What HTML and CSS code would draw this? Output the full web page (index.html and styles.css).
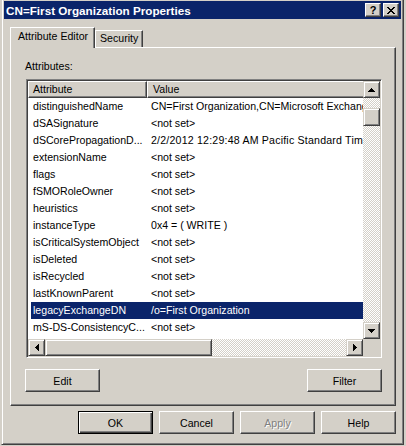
FILE: index.html
```html
<!DOCTYPE html>
<html>
<head>
<meta charset="utf-8">
<link rel="stylesheet" href="styles.css">
</head>
<body>
<div class="window">
  <div class="titlebar">
    <span class="title">CN=First Organization Properties</span>
    <div class="capbtns">
      <div class="capbtn help">?</div>
      <div class="capbtn">
        <svg width="8" height="7" viewBox="0 0 8 7" shape-rendering="crispEdges"><path d="M0 0h2v1h-2zM6 0h2v1h-2zM1 1h2v1h-2zM5 1h2v1h-2zM2 2h4v1h-4zM3 3h2v1h-2zM2 4h4v1h-4zM1 5h2v1h-2zM5 5h2v1h-2zM0 6h2v1h-2zM6 6h2v1h-2z" fill="#000"/></svg>
      </div>
    </div>
  </div>
  <div class="tabs">
    <div class="tab active">Attribute Editor</div>
    <div class="tab inactive">Security</div>
  </div>
  <div class="panel">
    <div class="label">Attributes:</div>
    <div class="listbox">
      <div class="listview">
        <div class="header">
          <div class="hcell h1">Attribute</div>
          <div class="hcell h2">Value</div>
        </div>
        <div class="row"><div class="c1">distinguishedName</div><div class="c2">CN=First Organization,CN=Microsoft Exchange,CN=Services,CN=Configuration</div></div>
        <div class="row"><div class="c1">dSASignature</div><div class="c2">&lt;not set&gt;</div></div>
        <div class="row"><div class="c1">dSCorePropagationD...</div><div class="c2 wide">2/2/2012 12:29:48 AM Pacific Standard Time</div></div>
        <div class="row"><div class="c1">extensionName</div><div class="c2">&lt;not set&gt;</div></div>
        <div class="row"><div class="c1">flags</div><div class="c2">&lt;not set&gt;</div></div>
        <div class="row"><div class="c1">fSMORoleOwner</div><div class="c2">&lt;not set&gt;</div></div>
        <div class="row"><div class="c1">heuristics</div><div class="c2">&lt;not set&gt;</div></div>
        <div class="row"><div class="c1">instanceType</div><div class="c2">0x4 = ( WRITE )</div></div>
        <div class="row"><div class="c1">isCriticalSystemObject</div><div class="c2">&lt;not set&gt;</div></div>
        <div class="row"><div class="c1">isDeleted</div><div class="c2">&lt;not set&gt;</div></div>
        <div class="row"><div class="c1">isRecycled</div><div class="c2">&lt;not set&gt;</div></div>
        <div class="row"><div class="c1">lastKnownParent</div><div class="c2">&lt;not set&gt;</div></div>
        <div class="row selected"><div class="c1">legacyExchangeDN</div><div class="c2">/o=First Organization</div></div>
        <div class="row"><div class="c1">mS-DS-ConsistencyC...</div><div class="c2">&lt;not set&gt;</div></div>
        <div class="row"><div class="c1">mS-DS-ConsistencyG...</div><div class="c2"></div></div>
      </div>
      <div class="vscroll">
        <div class="sbtn">
          <svg width="7" height="4" viewBox="0 0 7 4" shape-rendering="crispEdges"><path d="M3 0h1v1h-1zM2 1h3v1h-3zM1 2h5v1h-5zM0 3h7v1h-7z" fill="#000"/></svg>
        </div>
        <div class="vtrack"><div class="vthumb"></div></div>
        <div class="sbtn">
          <svg width="7" height="4" viewBox="0 0 7 4" shape-rendering="crispEdges"><path d="M0 0h7v1h-7zM1 1h5v1h-5zM2 2h3v1h-3zM3 3h1v1h-1z" fill="#000"/></svg>
        </div>
      </div>
      <div class="hscroll">
        <div class="sbtn">
          <svg width="4" height="7" viewBox="0 0 4 7" shape-rendering="crispEdges"><path d="M0 3h1v1h-1zM1 2h1v3h-1zM2 1h1v5h-1zM3 0h1v7h-1z" fill="#000"/></svg>
        </div>
        <div class="hthumb"></div>
        <div class="htrack"></div>
        <div class="sbtn">
          <svg width="4" height="7" viewBox="0 0 4 7" shape-rendering="crispEdges"><path d="M0 0h1v7h-1zM1 1h1v5h-1zM2 2h1v3h-1zM3 3h1v1h-1z" fill="#000"/></svg>
        </div>
      </div>
      <div class="corner"></div>
    </div>
    <div class="panelbtns">
      <button class="btn">Edit</button>
      <button class="btn">Filter</button>
    </div>
  </div>
  <div class="dlgbtns">
    <button class="btn default">OK</button>
    <button class="btn">Cancel</button>
    <button class="btn disabled">Apply</button>
    <button class="btn">Help</button>
  </div>
</div>
</body>
</html>
```
FILE: styles.css
```css
* { box-sizing: border-box; }
html, body { margin: 0; padding: 0; }
body {
  background: #d4d0c8;
  width: 406px;
  height: 446px;
  overflow: hidden;
  font-family: "Liberation Sans", Arial, sans-serif;
  font-size: 10.6px;
  color: #000;
}
.window {
  margin: -2px 0 0 1px;
  width: 403px;
  height: 447px;
  border: 1px solid;
  border-color: #d4d0c8 #404040 #404040 #d4d0c8;
  box-shadow: inset 1px 1px #fff, inset -1px -1px #808080;
  padding: 2px;
  display: flex;
  flex-direction: column;
}
.titlebar {
  height: 18px;
  flex: none;
  background: #0a246a;
  display: flex;
  align-items: center;
  padding: 0 2px;
}
.title {
  flex: 1;
  color: #fff;
  font-weight: bold;
  font-size: 11.7px;
  white-space: nowrap;
}
.capbtns { display: flex; gap: 2px; }
.capbtn {
  width: 16px;
  height: 14px;
  background: #d4d0c8;
  border: 1px solid;
  border-color: #fff #404040 #404040 #fff;
  box-shadow: inset -1px -1px #808080;
  display: flex;
  align-items: center;
  justify-content: center;
}
.capbtn.help {
  font-weight: bold;
  font-size: 11px;
  line-height: 12px;
}
.tabs {
  display: flex;
  align-items: flex-end;
  height: 20px;
  margin: 8px 0 0 6px;
  position: relative;
  z-index: 1;
  flex: none;
}
.tab {
  background: #d4d0c8;
  border: 1px solid;
  border-bottom: none;
  border-color: #fff #404040 transparent #fff;
  box-shadow: inset -1px 0 #808080;
  line-height: 13px;
  white-space: nowrap;
}
.tab.active {
  width: 85px;
  height: 21px;
  margin-bottom: -1px;
  padding: 2px 0 0 7px;
}
.tab.inactive {
  width: 48px;
  height: 17px;
  padding: 1px 0 0 4px;
}
.panel {
  flex: none;
  margin-left: 6px;
  width: 386px;
  height: 359px;
  border: 1px solid;
  border-color: #fff #404040 #404040 #fff;
  box-shadow: inset -1px -1px #808080;
  padding: 12px 0 0 15px;
}
.label {
  line-height: 13px;
  height: 13px;
  margin: 0 0 6px -1px;
}
.listbox {
  width: 356px;
  height: 279px;
  border: 1px solid;
  border-color: #808080 #fff #fff #808080;
  box-shadow: inset 1px 1px #404040, inset -1px -1px #d4d0c8;
  padding: 1px;
  display: grid;
  grid-template-columns: 335px 17px;
  grid-template-rows: 258px 17px;
}
.listview {
  background: #fff;
  overflow: hidden;
}
.header { display: flex; height: 17px; }
.hcell {
  flex: none;
  height: 17px;
  background: #d4d0c8;
  border: 1px solid;
  border-color: #fff #404040 #404040 #fff;
  box-shadow: inset -1px -1px #808080;
  line-height: 15px;
  white-space: nowrap;
}
.h1 { width: 119px; padding-left: 4px; }
.h2 { width: 300px; padding-left: 5px; }
.row {
  display: flex;
  height: 17px;
  line-height: 17px;
  margin-left: 3px;
  white-space: nowrap;
}
.row.selected { background: #0a246a; color: #fff; }
.c1 { width: 116px; flex: none; padding-left: 2px; overflow: hidden; }
.c2 { flex: none; width: 400px; padding-left: 4px; overflow: hidden; }
.c2.wide { letter-spacing: 0.2px; }
.vscroll { display: flex; flex-direction: column; }
.hscroll { display: flex; }
.sbtn {
  flex: none;
  width: 17px;
  height: 17px;
  background: #d4d0c8;
  border: 1px solid;
  border-color: #d4d0c8 #404040 #404040 #d4d0c8;
  box-shadow: inset 1px 1px #fff, inset -1px -1px #808080;
  display: flex;
  align-items: center;
  justify-content: center;
}
.sbtn svg { display: block; }
.vtrack, .htrack {
  flex: 1;
  background: repeating-conic-gradient(#fff 0 25%, #d4d0c8 0 50%) 0 0 / 2px 2px;
}
.vtrack { padding-top: 10px; }
.vthumb, .hthumb {
  background: #d4d0c8;
  border: 1px solid;
  border-color: #d4d0c8 #404040 #404040 #d4d0c8;
  box-shadow: inset 1px 1px #fff, inset -1px -1px #808080;
}
.vthumb { width: 17px; height: 18px; }
.hthumb { width: 167px; height: 17px; flex: none; }
.corner { background: #d4d0c8; }
.panelbtns {
  display: flex;
  justify-content: space-between;
  width: 357px;
  margin: 11px 0 0 -1px;
}
.btn {
  width: 75px;
  height: 23px;
  padding: 0;
  margin: 0;
  background: #d4d0c8;
  border: 1px solid;
  border-color: #fff #404040 #404040 #fff;
  box-shadow: inset -1px -1px #808080;
  font-family: inherit;
  font-size: 10.6px;
  color: #000;
  border-radius: 0;
}
.btn.default {
  border-color: #000;
  box-shadow: inset 1px 1px #fff, inset -1px -1px #404040, inset -2px -2px #808080;
}
.btn.disabled {
  color: #808080;
  text-shadow: 1px 1px #fff;
}
.dlgbtns {
  flex: none;
  display: flex;
  justify-content: flex-end;
  gap: 6px;
  margin: 5px 5px 0 0;
}
```
